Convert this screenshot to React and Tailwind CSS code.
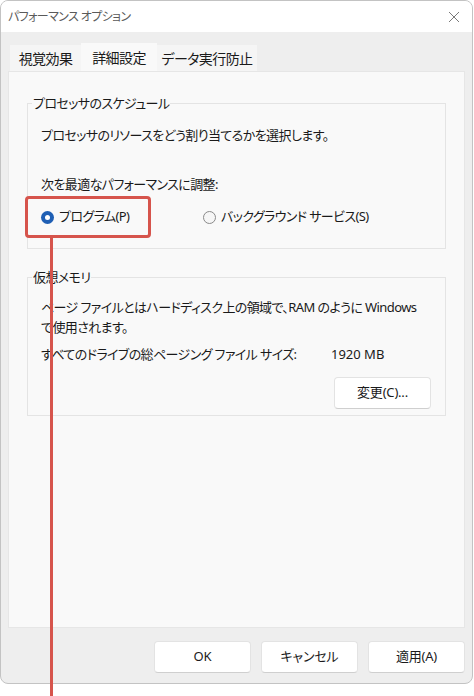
import React from 'react';

const font = { fontFamily: '"Noto Sans", "Noto Sans CJK JP", sans-serif' };

const Radio = ({ checked, label }) => (
  <label className="flex items-center gap-[5px] whitespace-nowrap">
    {checked ? (
      <span className="w-[13px] h-[13px] rounded-full bg-[#1f5fb4] flex items-center justify-center">
        <span className="w-[5px] h-[5px] rounded-full bg-white" />
      </span>
    ) : (
      <span className="w-[13px] h-[13px] rounded-full border border-[#8a8a8a] bg-[#f6f6f6]" />
    )}
    <span>{label}</span>
  </label>
);

const Btn = ({ children, className = '' }) => (
  <button
    className={`h-[32px] w-[97px] bg-white border border-[#e3e3e3] border-b-[#cfcfcf] rounded-[4px] text-[13px] tracking-[-0.2px] text-[#1b1b1b] ${className}`}
  >
    {children}
  </button>
);

export default function App() {
  return (
    <div
      className="relative w-[474px] h-[696px] bg-white overflow-hidden text-[#1a1a1a] [font-feature-settings:'palt'] tracking-[-0.6px]"
      style={font}
    >
      {/* window */}
      <div className="w-[473px] h-[684px] flex flex-col border border-[#c3c3c3] rounded-[8px] overflow-hidden bg-[#eeeeee]">
        {/* title bar */}
        <div className="h-[33px] bg-white flex items-center justify-between pl-[7px] pr-[10px]">
          <span className="text-[12px] text-[#5a5a5a]">パフォーマンス オプション</span>
          <svg width="12" height="12" viewBox="0 0 12 12" className="mr-[2px]">
            <path d="M1 1 L11 11 M11 1 L1 11" stroke="#7a7a7a" strokeWidth="1" />
          </svg>
        </div>

        <div className="flex-1 flex flex-col px-[7px] pt-[11px] pb-[10px]">
          {/* tabs */}
          <div className="flex items-end pl-[2px] h-[28px] text-[14px] whitespace-nowrap">
            <div className="h-[26px] w-[71px] flex items-center justify-center bg-[#f5f5f5]">視覚効果</div>
            <div className="h-[28px] w-[76px] flex items-center justify-center bg-[#f9f9f9]">詳細設定</div>
            <div className="h-[26px] w-[100px] flex items-center justify-center bg-[#f5f5f5]">データ実行防止</div>
          </div>

          {/* tab page */}
          <div className="h-[557px] bg-[#f9f9f9] border border-[#e6e6e6] pt-[22px] px-[18px] text-[13px]">
            <fieldset className="border border-[#e4e4e4] pl-[13px] pr-[14px] pb-[21px]">
              <legend className="-ml-[9px] px-[1px] leading-[18px]">プロセッサのスケジュール</legend>
              <div className="mt-[13px] leading-[20px]">プロセッサのリソースをどう割り当てるかを選択します。</div>
              <div className="mt-[29px] leading-[20px]">次を最適なパフォーマンスに調整:</div>
              <div className="mt-[13px] h-[20px] flex items-center">
                <div className="w-[162px]">
                  <Radio checked label="プログラム(P)" />
                </div>
                <Radio label="バックグラウンド サービス(S)" />
              </div>
            </fieldset>

            <fieldset className="mt-[19px] border border-[#e4e4e4] pl-[13px] pr-[14px] pb-[6px]">
              <legend className="-ml-[9px] px-[1px] leading-[18px]">仮想メモリ</legend>
              <div className="mt-[11px] leading-[20px] pr-[6px]">
                ページ ファイルとはハードディスク上の領域で、RAM のように Windows で使用されます。
              </div>
              <div className="mt-[7px] leading-[20px] flex whitespace-nowrap">
                <span className="w-[290px]">すべてのドライブの総ページング ファイル サイズ:</span>
                <span className="tracking-normal">1920 MB</span>
              </div>
              <div className="mt-[13px] flex justify-end">
                <Btn>変更(C)...</Btn>
              </div>
            </fieldset>
          </div>

          {/* bottom buttons */}
          <div className="mt-[13px] flex justify-end gap-[10px]">
            <Btn>OK</Btn>
            <Btn>キャンセル</Btn>
            <Btn>適用(A)</Btn>
          </div>
        </div>
      </div>

      {/* red annotation */}
      <div className="absolute left-[25px] top-[196px] w-[126px] h-[42px] border-[3px] border-[#d6544c] rounded-[4px]" />
      <div className="absolute left-[50px] top-[237px] w-[3px] h-[460px] bg-[#d6544c]" />
    </div>
  );
}
